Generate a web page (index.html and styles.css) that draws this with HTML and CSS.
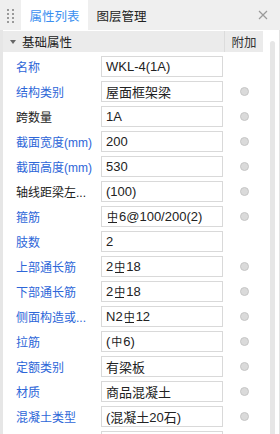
FILE: index.html
```html
<!DOCTYPE html>
<html>
<head>
<meta charset="utf-8">
<link rel="stylesheet" href="styles.css">
</head>
<body>
<div class="panel">
  <div class="tabs">
    <div class="grip"><i></i><i></i><i></i><i></i><i></i><i></i><i></i><i></i></div>
    <div class="tab active">属性列表</div>
    <div class="tab">图层管理</div>
    <div class="close"><svg width="10" height="10" viewBox="0 0 10 10"><path d="M1 1L9 9M9 1L1 9" stroke="#9a9a9a" stroke-width="1.2" fill="none"/></svg></div>
  </div>
  <div class="body">
    <div class="content">
      <div class="group">
        <span class="tri"></span>
        <span class="group-title">基础属性</span>
        <span class="extra">附加</span>
      </div>
      <div class="rows">
        <div class="row"><span class="label blue">名称</span><span class="value">WKL-4(1A)</span><span class="dot none"></span></div>
        <div class="row"><span class="label blue">结构类别</span><span class="value">屋面框架梁</span><span class="dot"></span></div>
        <div class="row"><span class="label">跨数量</span><span class="value">1A</span><span class="dot"></span></div>
        <div class="row"><span class="label blue">截面宽度(mm)</span><span class="value">200</span><span class="dot"></span></div>
        <div class="row"><span class="label blue">截面高度(mm)</span><span class="value">530</span><span class="dot"></span></div>
        <div class="row"><span class="label">轴线距梁左...</span><span class="value">(100)</span><span class="dot"></span></div>
        <div class="row"><span class="label blue">箍筋</span><span class="value"><span class="r3">中</span>6@100/200(2)</span><span class="dot"></span></div>
        <div class="row"><span class="label blue">肢数</span><span class="value">2</span><span class="dot none"></span></div>
        <div class="row"><span class="label blue">上部通长筋</span><span class="value">2<span class="r3">中</span>18</span><span class="dot"></span></div>
        <div class="row"><span class="label blue">下部通长筋</span><span class="value">2<span class="r3">中</span>18</span><span class="dot"></span></div>
        <div class="row"><span class="label blue">侧面构造或...</span><span class="value">N2<span class="r3">中</span>12</span><span class="dot"></span></div>
        <div class="row"><span class="label blue">拉筋</span><span class="value">(<span class="r1">中</span>6)</span><span class="dot"></span></div>
        <div class="row"><span class="label blue">定额类别</span><span class="value">有梁板</span><span class="dot"></span></div>
        <div class="row"><span class="label blue">材质</span><span class="value">商品混凝土</span><span class="dot"></span></div>
        <div class="row"><span class="label blue">混凝土类型</span><span class="value">(混凝土20石)</span><span class="dot"></span></div>
        <div class="row"><span class="label blue"></span><span class="value"></span><span class="dot none"></span></div>
      </div>
    </div>
    <div class="scroll"><div class="thumb"></div></div>
  </div>
</div>
</body>
</html>
```
FILE: styles.css
```css
html, body {
  margin: 0;
  padding: 0;
}
body {
  width: 280px;
  height: 434px;
  overflow: hidden;
  font-family: "Liberation Sans", "Noto Sans CJK SC", sans-serif;
  font-size: 13px;
  color: #333;
}
.panel {
  width: 280px;
  height: 434px;
  background: #efefef;
  display: flex;
  flex-direction: column;
}
.tabs {
  height: 30px;
  display: flex;
  align-items: stretch;
  flex: none;
}
.grip {
  width: 21px;
  display: grid;
  grid-template-columns: 2px 2px;
  grid-template-rows: repeat(4, 2px);
  column-gap: 3px;
  row-gap: 2px;
  align-content: center;
  justify-content: center;
  padding-top: 1px;
  box-sizing: border-box;
}
.grip i {
  display: block;
  background: #9a9a9a;
}
.tab {
  width: 67px;
  display: flex;
  align-items: center;
  justify-content: center;
  color: #222;
  font-size: 12.5px;
}
.tab.active {
  background: #fff;
  color: #3b8ff0;
}
.close {
  margin-left: auto;
  width: 30px;
  display: flex;
  align-items: center;
  justify-content: center;
  padding-right: 2px;
}
.body {
  flex: 1;
  display: flex;
  background: #fff;
  border-left: 3px solid #e6e6e6;
  border-right: 1px solid #e2e2e2;
  overflow: hidden;
}
.content {
  width: 260px;
  flex: none;
}
.group {
  margin-top: 1px;
  height: 21px;
  background: #ebebeb;
  display: flex;
  align-items: center;
}
.tri {
  width: 0;
  height: 0;
  margin-left: 7px;
  border-left: 3px solid transparent;
  border-right: 3px solid transparent;
  border-top: 4px solid #666;
}
.group-title {
  margin-left: 6px;
  color: #222;
  font-size: 12.5px;
}
.extra {
  margin-left: auto;
  width: 38px;
  height: 21px;
  border-left: 1px solid #dcdcdc;
  display: flex;
  align-items: center;
  justify-content: center;
  color: #333;
  font-size: 12.5px;
}
.rows {
  padding-top: 2px;
}
.row {
  height: 25px;
  display: flex;
  align-items: center;
}
.label {
  width: 85px;
  padding-left: 13px;
  flex: none;
  white-space: nowrap;
  color: #222;
  font-size: 12px;
}
.label.blue {
  color: #2d66d8;
}
.value {
  width: 122px;
  height: 21px;
  box-sizing: border-box;
  border: 1px solid #d9d9d9;
  padding-left: 4px;
  display: flex;
  align-items: center;
  white-space: nowrap;
  color: #222;
  flex: none;
  font-size: 13px;
}
.r3, .r1 {
  display: inline-block;
  font-family: "Noto Sans CJK SC", sans-serif;
  font-size: 11px;
  line-height: 11px;
  margin: 0 1px;
  position: relative;
}
.r3::after {
  content: "";
  position: absolute;
  left: 1px;
  right: 1px;
  bottom: -1px;
  height: 1px;
  background: #222;
}
.dot {
  width: 9px;
  height: 9px;
  box-sizing: border-box;
  border-radius: 50%;
  background: #dadada;
  border: 1px solid #c6c6c6;
  margin-left: 17px;
  flex: none;
}
.dot.none {
  visibility: hidden;
}
.scroll {
  flex: 1;
  display: flex;
  justify-content: center;
  padding-top: 11px;
}
.thumb {
  width: 5px;
  height: 420px;
  background: #e6e6e6;
  border-radius: 3px;
  margin-left: 2px;
}
```
